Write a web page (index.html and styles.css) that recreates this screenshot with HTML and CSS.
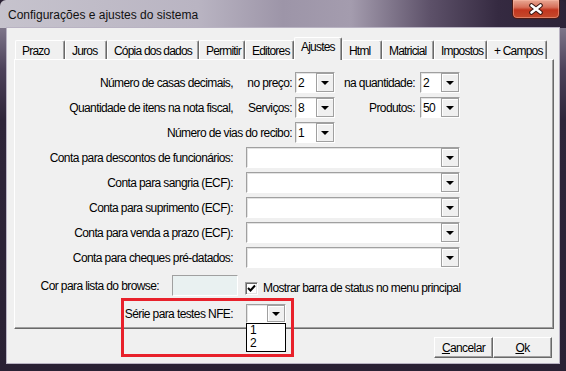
FILE: index.html
```html
<!DOCTYPE html>
<html lang="pt-BR">

<head>
    <meta charset="UTF-8">
    <meta name="viewport" content="width=device-width, initial-scale=1.0">
    <title>Configurações e ajustes do sistema</title>
    <link rel="stylesheet" href="styles.css">
</head>

<body>
    <div class="window">
        <div class="titlebar">
            <span class="title">Configurações e ajustes do sistema</span>
            <div class="close-btn">
                <svg width="16" height="12" viewBox="0 0 16 12">
                    <path d="M3.5 2.5 L12.5 9.5 M12.5 2.5 L3.5 9.5" stroke="#3b1712" stroke-width="4.6" stroke-linecap="round" fill="none" />
                    <path d="M3.5 2.5 L12.5 9.5 M12.5 2.5 L3.5 9.5" stroke="#ffffff" stroke-width="2.6" stroke-linecap="round" fill="none" />
                </svg>
            </div>
        </div>

        <div class="client">
            <div class="tabs">
                <div class="tab">Prazo</div>
                <div class="tab">Juros</div>
                <div class="tab">Cópia dos dados</div>
                <div class="tab">Permitir</div>
                <div class="tab">Editores</div>
                <div class="tab active">Ajustes</div>
                <div class="tab">Html</div>
                <div class="tab">Matricial</div>
                <div class="tab">Impostos</div>
                <div class="tab">+ Campos</div>
            </div>

            <div class="page">
                <div class="row">
                    <span class="lbl">Número de casas decimais,</span>
                    <span class="lbl-sm">no preço:</span>
                    <div class="combo combo-sm"><span class="val">2</span><span class="drop"></span></div>
                    <span class="lbl-md">na quantidade:</span>
                    <div class="combo combo-sm"><span class="val">2</span><span class="drop"></span></div>
                </div>
                <div class="row">
                    <span class="lbl">Quantidade de itens na nota fiscal,</span>
                    <span class="lbl-sm">Serviços:</span>
                    <div class="combo combo-sm"><span class="val">8</span><span class="drop"></span></div>
                    <span class="lbl-md">Produtos:</span>
                    <div class="combo combo-sm"><span class="val">50</span><span class="drop"></span></div>
                </div>
                <div class="row">
                    <span class="lbl lbl-wide">Número de vias do recibo:</span>
                    <div class="combo combo-sm"><span class="val">1</span><span class="drop"></span></div>
                </div>
                <div class="row">
                    <span class="lbl">Conta para descontos de funcionários:</span>
                    <div class="combo combo-lg"><span class="val"></span><span class="drop"></span></div>
                </div>
                <div class="row">
                    <span class="lbl">Conta para sangria (ECF):</span>
                    <div class="combo combo-lg"><span class="val"></span><span class="drop"></span></div>
                </div>
                <div class="row">
                    <span class="lbl">Conta para suprimento (ECF):</span>
                    <div class="combo combo-lg"><span class="val"></span><span class="drop"></span></div>
                </div>
                <div class="row">
                    <span class="lbl">Conta para venda a prazo (ECF):</span>
                    <div class="combo combo-lg"><span class="val"></span><span class="drop"></span></div>
                </div>
                <div class="row">
                    <span class="lbl">Conta para cheques pré-datados:</span>
                    <div class="combo combo-lg"><span class="val"></span><span class="drop"></span></div>
                </div>
                <div class="row row-color">
                    <span class="lbl lbl-color">Cor para lista do browse:</span>
                    <div class="color-box"></div>
                    <div class="check">
                        <svg width="9" height="9" viewBox="0 0 9 9">
                            <path d="M1 4 L3.5 6.5 L8 1.5" stroke="#000" stroke-width="2" fill="none" />
                        </svg>
                    </div>
                    <span class="check-lbl">Mostrar barra de status no menu principal</span>
                </div>
                <div class="row row-nfe">
                    <span class="lbl">Série para testes NFE:</span>
                    <div class="combo combo-xs">
                        <span class="val"></span><span class="drop"></span>
                        <div class="drop-list">
                            <div>1</div>
                            <div>2</div>
                        </div>
                    </div>
                </div>
            </div>

            <div class="actions">
                <button class="btn"><u>C</u>ancelar</button>
                <button class="btn"><u>O</u>k</button>
            </div>
        </div>

        <div class="highlight"></div>
    </div>
</body>

</html>
```

FILE: styles.css
```css
body {
    margin: 0;
    background: #2a2134;
    font-family: "Liberation Sans", Arial, sans-serif;
    font-size: 12px;
    letter-spacing: -0.6px;
    color: #000;
}

.window {
    position: relative;
    width: 566px;
    height: 371px;
    display: flex;
    flex-direction: column;
    border-radius: 6px 6px 0 0;
    background:
        linear-gradient(90deg, #c6c3cd 0, #b9b4c2 35%, #9d95a8 50%, #a49cae 62%, #5d5169 76%, #352a41 88%, #2c2338 100%) top / 100% 28px no-repeat,
        linear-gradient(180deg, #7d7589 28px, #4c4159 70px, #2e2539 120px, #2a2134 100%);
    overflow: hidden;
}

/* title bar */
.titlebar {
    height: 28px;
    display: flex;
    align-items: flex-start;
}

.title {
    font-size: 12px;
    letter-spacing: 0;
    padding: 8px 0 0 8px;
    color: #111;
}

.close-btn {
    margin-left: auto;
    margin-right: 6px;
    width: 48px;
    height: 19px;
    box-sizing: border-box;
    border: 1px solid #4b1a14;
    border-top: none;
    border-radius: 0 0 5px 5px;
    background: linear-gradient(180deg, #e9a894 0, #d7705a 40%, #c2361f 55%, #c54a2c 100%);
    box-shadow: inset 0 0 0 1px rgba(255, 190, 170, 0.45);
    display: flex;
    align-items: center;
    justify-content: center;
}

/* client area */
.client {
    flex: 1;
    margin: 0 7px 8px 7px;
    padding: 9px 5px 0 7px;
    background: #f0f0f0;
    box-shadow: 0 0 0 1px #b9b3c3;
    display: flex;
    flex-direction: column;
}

.tabs {
    height: 22px;
    display: flex;
    align-items: flex-end;
    padding-left: 1px;
}

.tab {
    height: 19px;
    box-sizing: border-box;
    padding: 3px 0 0 6px;
    border: 1px solid;
    border-color: #fff #696969 transparent #fff;
    border-bottom: none;
    border-radius: 2px 2px 0 0;
    box-shadow: inset -1px 0 #a0a0a0;
    letter-spacing: -0.8px;
    white-space: nowrap;
}

.tab:nth-child(1) { width: 50px; }
.tab:nth-child(2) { width: 42px; }
.tab:nth-child(3) { width: 92px; }
.tab:nth-child(4) { width: 46px; }
.tab:nth-child(5) { width: 49px; }
.tab:nth-child(6) { width: 48px; }
.tab:nth-child(7) { width: 40px; }
.tab:nth-child(8) { width: 52px; }
.tab:nth-child(9) { width: 53px; }
.tab:nth-child(10) { width: 60px; }

.tab.active {
    position: relative;
    z-index: 1;
    height: 23px;
    margin-bottom: -1px;
    padding-top: 2px;
    background: #f0f0f0;
}

.page {
    height: 270px;
    box-sizing: border-box;
    border: 1px solid;
    border-color: #fff #696969 #696969 #fff;
    box-shadow: inset -1px -1px #a0a0a0;
    padding-top: 12px;
    display: flex;
    flex-direction: column;
    gap: 4px;
}

.row {
    display: flex;
    align-items: center;
    height: 21px;
}

.lbl {
    width: 218px;
    text-align: right;
    white-space: nowrap;
}

.lbl-wide {
    width: 277px;
    padding-right: 3px;
}

.lbl-sm {
    width: 59px;
    padding-right: 3px;
    text-align: right;
    white-space: nowrap;
}

.lbl-md {
    width: 80px;
    padding-right: 5px;
    text-align: right;
    white-space: nowrap;
}

/* combo boxes */
.combo {
    position: relative;
    height: 21px;
    box-sizing: border-box;
    display: flex;
    background: #fff;
    border: 1px solid;
    border-color: #a0a0a0 #fff #fff #a0a0a0;
    box-shadow: inset 1px 1px #e3e3e3;
}

.combo-sm {
    width: 40px;
}

.combo-lg {
    width: 214px;
    margin-left: 13px;
}

.combo-xs {
    width: 40px;
    height: 19px;
    margin-left: 13px;
}

.val {
    flex: 1;
    padding: 3px 0 0 2px;
}

.drop {
    width: 18px;
    box-sizing: border-box;
    background: #f0f0f0;
    border: 1px solid #a0a0a0;
    box-shadow: inset 1px 1px #fff;
    display: flex;
    align-items: center;
    justify-content: center;
}

.drop::after {
    content: "";
    width: 0;
    height: 0;
    border-left: 4px solid transparent;
    border-right: 4px solid transparent;
    border-top: 4px solid #000;
}

.drop-list {
    position: absolute;
    left: -1px;
    top: 18px;
    width: 40px;
    height: 29px;
    box-sizing: border-box;
    border: 1px solid #000;
    background: #fff;
    padding-left: 3px;
    line-height: 13px;
    z-index: 2;
}

/* color / checkbox row */
.row-color {
    margin-top: 3px;
}

.lbl-color {
    width: 144px;
}

.color-box {
    width: 66px;
    height: 21px;
    box-sizing: border-box;
    margin-left: 13px;
    background: #e9f1f1;
    border: 1px solid;
    border-color: #a0a0a0 #fff #fff #a0a0a0;
}

.check {
    width: 13px;
    height: 13px;
    box-sizing: border-box;
    margin: 5px 0 0 7px;
    background: #fff;
    border: 1px solid;
    border-color: #a0a0a0 #fff #fff #a0a0a0;
    box-shadow: inset 1px 1px #696969, inset -1px -1px #e3e3e3;
    display: flex;
    align-items: center;
    justify-content: center;
}

.check-lbl {
    margin: 5px 0 0 5px;
    white-space: nowrap;
}

.row-nfe {
    margin-top: 4px;
    height: 19px;
}

/* bottom buttons */
.actions {
    display: flex;
    justify-content: flex-end;
    margin: 8px 2px 0 0;
}

.btn {
    width: 59px;
    height: 21px;
    padding: 0;
    font: inherit;
    letter-spacing: inherit;
    color: #000;
    background: #f0f0f0;
    border: 1px solid;
    border-color: #fff #696969 #696969 #fff;
    box-shadow: inset -1px -1px #a0a0a0;
}

/* annotation around the NFE field */
.highlight {
    position: absolute;
    left: 121px;
    top: 298px;
    width: 173px;
    height: 59px;
    box-sizing: border-box;
    border: 3px solid #e8212b;
}
```
